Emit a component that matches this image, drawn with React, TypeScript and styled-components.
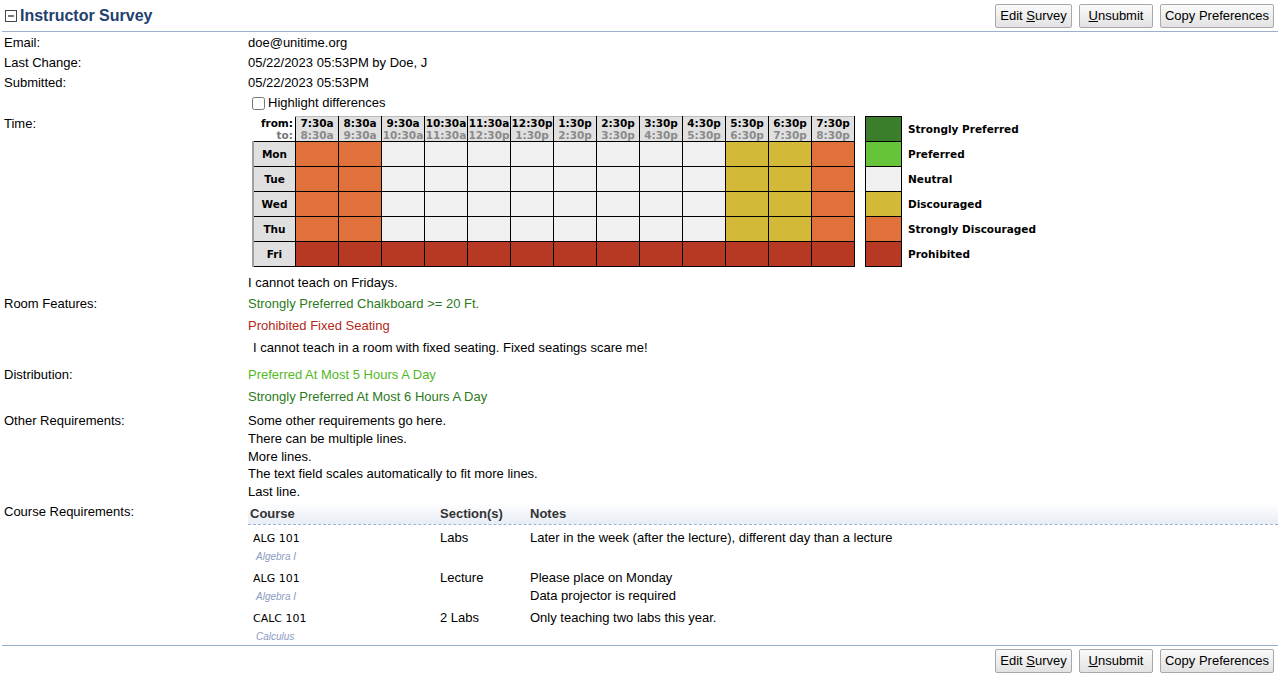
import React, {FC} from "react";
import styled, {createGlobalStyle} from 'styled-components';

const GlobalStyle = createGlobalStyle`
  body {
    margin: 0;
    font-family: "Liberation Sans", Arial, sans-serif;
    font-size: 13px;
    color: #000;
    background: #fff;
  }
`;

const Page = styled.div`
  padding: 0 2px;
`;

const HeaderBar = styled.div<{bottom?: boolean}>`
  display: flex;
  justify-content: space-between;
  height: ${({bottom}) => bottom ? '30px' : '32px'};
  border-${({bottom}) => bottom ? 'top' : 'bottom'}: 1px solid #9cb0ce;
  box-sizing: border-box;
  padding-top: ${({bottom}) => bottom ? '3px' : '0'};
  align-items: ${({bottom}) => bottom ? 'flex-start' : 'center'};
`;

const Title = styled.div`
  display: flex;
  align-items: center;
  gap: 3px;
  padding-left: 3px;
  font-size: 16px;
  font-weight: bold;
  color: #23406e;
`;

const Buttons = styled.div`
  display: flex;
  gap: 7px;
  padding-right: 4px;
`;

const Button = styled.button<{w: number}>`
  width: ${({w}) => w}px;
  height: 24px;
  padding: 0;
  font-family: "Liberation Sans", Arial, sans-serif;
  font-size: 13px;
  color: #000;
  background: linear-gradient(#fafafa, #e2e2e2);
  border: 1px solid #a8a8a8;
  border-radius: 2px;
  u { text-decoration: underline; }
`;

const Form = styled.div`
  display: grid;
  grid-template-columns: 246px 1fr;
`;

const Label = styled.div<{lh?: number; top?: number}>`
  padding-left: 2px;
  line-height: ${({lh}) => lh || 20}px;
  margin-top: ${({top}) => top || 0}px;
`;

const Value = styled.div<{lh?: number; top?: number}>`
  line-height: ${({lh}) => lh || 20}px;
  margin-top: ${({top}) => top || 0}px;
  min-width: 0;
`;

const CheckRow = styled.label`
  display: flex;
  align-items: center;
  height: 20px;
  input { margin: 0 3px 0 4px; width: 13px; height: 13px; }
`;

const TimeBlock = styled.div`
  display: flex;
  align-items: flex-start;
  gap: 10px;
  margin-top: 4px;
  margin-left: 4px;
`;

const Grid = styled.table`
  border-collapse: collapse;
  font-family: "DejaVu Sans", Verdana, sans-serif;
  font-size: 10.5px;
  font-weight: bold;
  td, th { padding: 0; }
`;

const Corner = styled.th`
  width: 40px;
  height: 24px;
  text-align: right;
  padding-right: 2px !important;
  line-height: 12px;
  font-weight: bold;
  border: none;
  background: #fff;
`;

const TimeHead = styled.th`
  width: 42px;
  height: 24px;
  background: #e0e0e0;
  border: 1px solid #000;
  border-top: 1px solid #bbb;
  line-height: 12px;
  text-align: center;
  white-space: nowrap;
`;

const Sub = styled.span<{dark?: boolean}>`
  display: block;
  color: ${({dark}) => dark ? '#777' : '#8a8a8a'};
`;

const FromLabel = styled.span`
  display: block;
`;

const DayHead = styled.td`
  width: 38px;
  height: 24px;
  background: #e0e0e0;
  border: 1px solid #000;
  border-left: 2px solid #a0a0a0;
  text-align: center;
`;

const COLORS: Record<string, string> = {
  R: '#3a7d2b',
  P: '#66c43a',
  N: '#f0f0f0',
  D: '#d4b838',
  S: '#e0713b',
  X: '#b73923',
};

const Cell = styled.td<{pref: string}>`
  width: 42px;
  height: 24px;
  border: 1px solid #000;
  background: ${({pref}) => COLORS[pref]};
`;

const Legend = styled.table`
  border-collapse: collapse;
  font-family: "DejaVu Sans", Verdana, sans-serif;
  font-size: 10.5px;
  font-weight: bold;
  td { padding: 0; }
`;

const Swatch = styled.td<{pref: string}>`
  width: 35px;
  height: 24px;
  border: 1px solid #000;
  background: ${({pref}) => COLORS[pref]};
`;

const LegendText = styled.td`
  padding-left: 6px !important;
  white-space: nowrap;
`;

const Note = styled.div`
  margin-top: 6px;
`;

const Pref = styled.div<{color: string; indent?: boolean}>`
  line-height: 22px;
  color: ${({color}) => color};
  padding-left: ${({indent}) => indent ? '5px' : '0'};
`;

const CourseRowGrid = styled.div<{head?: boolean}>`
  display: grid;
  grid-template-columns: 190px 90px 1fr;
  ${({head}) => head ? `
    height: 22px;
    line-height: 22px;
    font-weight: bold;
    color: #333;
    background: linear-gradient(#ffffff, #e8ecf5);
    border-bottom: 1px dashed #9cb0ce;
    box-sizing: border-box;
  ` : `
    padding: 4px 0 0;
    height: 40px;
    box-sizing: border-box;
    line-height: 18px;
  `}
  > div { padding-left: 2px; }
`;

const CourseName = styled.div`
  font-family: "DejaVu Sans", Verdana, sans-serif;
  font-size: 11px;
  padding-left: 5px !important;
  line-height: 19px;
`;

const CourseTitle = styled.span`
  display: block;
  font-family: "Liberation Sans", Arial, sans-serif;
  font-size: 10px;
  font-style: italic;
  color: #8c9bc2;
  padding-left: 3px;
  line-height: 17px;
`;

const times = ['7:30a', '8:30a', '9:30a', '10:30a', '11:30a', '12:30p', '1:30p', '2:30p', '3:30p', '4:30p', '5:30p', '6:30p', '7:30p', '8:30p'];
const days = ['Mon', 'Tue', 'Wed', 'Thu', 'Fri'];
const weekday = 'SSNNNNNNNNDDS';
const friday = 'XXXXXXXXXXXXX';

const legend: [string, string][] = [
  ['R', 'Strongly Preferred'],
  ['P', 'Preferred'],
  ['N', 'Neutral'],
  ['D', 'Discouraged'],
  ['S', 'Strongly Discouraged'],
  ['X', 'Prohibited'],
];

const courses = [
  {name: 'ALG 101', title: 'Algebra I', section: 'Labs', notes: ['Later in the week (after the lecture), different day than a lecture']},
  {name: 'ALG 101', title: 'Algebra I', section: 'Lecture', notes: ['Please place on Monday', 'Data projector is required']},
  {name: 'CALC 101', title: 'Calculus', section: '2 Labs', notes: ['Only teaching two labs this year.']},
];

const ActionButtons: FC = () => (
  <Buttons>
    <Button w={77}>Edit <u>S</u>urvey</Button>
    <Button w={74}><u>U</u>nsubmit</Button>
    <Button w={114}>Copy Preferences</Button>
  </Buttons>
);

const CollapseIcon: FC = () => (
  <svg width="12" height="12" viewBox="0 0 12 12">
    <rect x="0.5" y="0.5" width="11" height="11" fill="#fff" stroke="#444" />
    <path d="M3 6h6" stroke="#222" strokeWidth="1.2" />
  </svg>
);

const TimeGrid: FC = () => (
  <TimeBlock>
    <Grid>
      <thead>
        <tr>
          <Corner><FromLabel>from:</FromLabel><Sub dark>to:</Sub></Corner>
          {times.slice(0, 13).map((t, i) => (
            <TimeHead key={t}>{t}<Sub>{times[i + 1]}</Sub></TimeHead>
          ))}
        </tr>
      </thead>
      <tbody>
        {days.map(d => {
          const prefs = d === 'Fri' ? friday : weekday;
          return (
            <tr key={d}>
              <DayHead>{d}</DayHead>
              {prefs.split('').map((p, i) => <Cell key={i} pref={p} />)}
            </tr>
          );
        })}
      </tbody>
    </Grid>
    <Legend>
      <tbody>
        {legend.map(([p, label]) => (
          <tr key={p}>
            <Swatch pref={p} />
            <LegendText>{label}</LegendText>
          </tr>
        ))}
      </tbody>
    </Legend>
  </TimeBlock>
);

const App: FC = () => (
  <Page>
    <GlobalStyle />
    <HeaderBar>
      <Title><CollapseIcon />Instructor Survey</Title>
      <ActionButtons />
    </HeaderBar>
    <Form>
      <Label top={1}>Email:</Label>
      <Value top={1}>doe@unitime.org</Value>
      <Label>Last Change:</Label>
      <Value>05/22/2023 05:53PM by Doe, J</Value>
      <Label>Submitted:</Label>
      <Value>05/22/2023 05:53PM</Value>
      <Label />
      <Value>
        <CheckRow><input type="checkbox" />Highlight differences</CheckRow>
      </Value>

      <Label top={1}>Time:</Label>
      <Value top={-1}>
        <TimeGrid />
        <Note>I cannot teach on Fridays.</Note>
      </Value>

      <Label lh={22}>Room Features:</Label>
      <Value>
        <Pref color="#2b7a1a">Strongly Preferred Chalkboard &gt;= 20 Ft.</Pref>
        <Pref color="#b32a1a">Prohibited Fixed Seating</Pref>
        <Pref color="#000" indent>I cannot teach in a room with fixed seating. Fixed seatings scare me!</Pref>
      </Value>

      <Label top={5} lh={22}>Distribution:</Label>
      <Value top={5}>
        <Pref color="#52b826">Preferred At Most 5 Hours A Day</Pref>
        <Pref color="#2b7a1a">Strongly Preferred At Most 6 Hours A Day</Pref>
      </Value>

      <Label top={4} lh={18}>Other Requirements:</Label>
      <Value top={4} lh={17.8}>
        <div>Some other requirements go here.</div>
        <div>There can be multiple lines.</div>
        <div>More lines.</div>
        <div>The text field scales automatically to fit more lines.</div>
        <div>Last line.</div>
      </Value>

      <Label top={2} lh={18}>Course Requirements:</Label>
      <Value top={2}>
        <CourseRowGrid head>
          <div>Course</div>
          <div>Section(s)</div>
          <div>Notes</div>
        </CourseRowGrid>
        {courses.map((c, i) => (
          <CourseRowGrid key={i}>
            <CourseName>{c.name}<CourseTitle>{c.title}</CourseTitle></CourseName>
            <div>{c.section}</div>
            <div>{c.notes.map(n => <div key={n}>{n}</div>)}</div>
          </CourseRowGrid>
        ))}
      </Value>
    </Form>
    <HeaderBar bottom>
      <span />
      <ActionButtons />
    </HeaderBar>
  </Page>
);

export default App;
